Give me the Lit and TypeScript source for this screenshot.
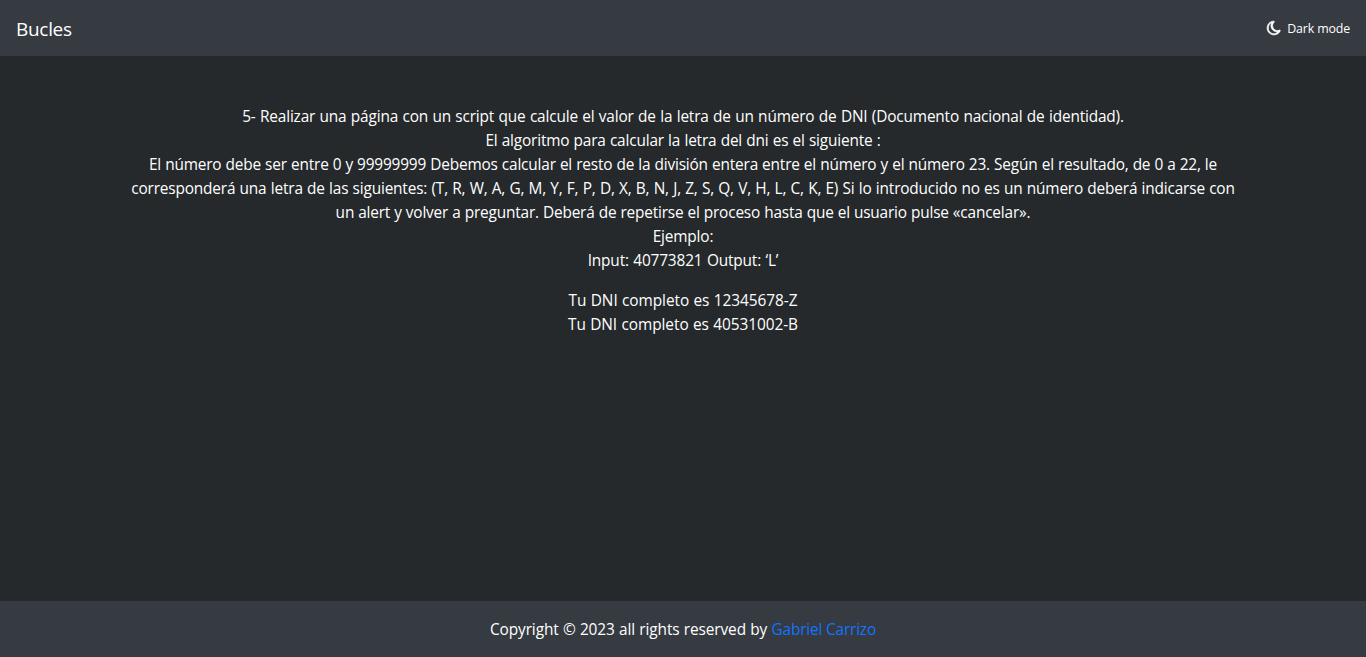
import { LitElement, html, css } from "lit";
import { customElement } from "lit/decorators.js";

@customElement("app-root")
export class AppRoot extends LitElement {
  static styles = css`
    :host {
      display: flex;
      flex-direction: column;
      height: 100vh;
      background: #25292b;
      color: #fff;
      font: 15.4px/24px "Segoe UI", "Open Sans", "Noto Sans", sans-serif;
      letter-spacing: -0.17px;
      white-space: nowrap;
    }
    header {
      display: flex;
      justify-content: space-between;
      align-items: center;
      height: 56px;
      padding: 0 16px;
      box-sizing: border-box;
      background: #363a41;
    }
    .brand { font-size: 19px; line-height: 30px; letter-spacing: -0.3px; padding-top: 2px; }
    .mode { display: flex; align-items: center; gap: 5px; font-size: 12.4px; line-height: 20px; letter-spacing: -0.15px; }
    .label { padding-top: 2px; }
    .moon { width: 16px; height: 16px; fill: #fff; stroke: #fff; stroke-width: 85; display: block; }
    main { flex: 1; padding-top: 49px; text-align: center; }
    p { margin: 0 0 16px; }
    .line { display: block; }
    .l1 { word-spacing: 0.57px; }
    .l2 { word-spacing: 0.38px; }
    .l3 { word-spacing: 0.27px; }
    .l4 { word-spacing: 0.45px; }
    .l5 { word-spacing: 0.2px; }
    .l7 { word-spacing: 0.7px; }
    .result { letter-spacing: -0.05px; word-spacing: 0.4px; }
    footer {
      height: 56px;
      padding: 17px 16px 15px;
      box-sizing: border-box;
      background: #363a41;
      text-align: center;
    }
    .copy { letter-spacing: -0.1px; word-spacing: 0.4px; }
    a { color: #0f75ff; text-decoration: none; }
  `;

  render() {
    return html`
      <header>
        <span class="brand">Bucles</span>
        <span class="mode">
          <svg class="moon" viewBox="0 0 1792 1792"><path d="M1340 1303q-54 9-110 9-182 0-337-90t-245-245-90-337q0-189 104-350-201 60-300 229t-107 384q0 130 51 248.500t136.500 204 204 136.500 220 51q144 0 253-61.500t220.500-171.500zm253-85q-94 203-283.500 324.500t-413.500 121.500q-156 0-298-61t-245-164-164-245-61-298q0-153 57.500-292.500t156-241.500 235.500-164.500 290-68.500q44-2 61 39 18 41-15 72-86 78-131.500 181.500t-45.500 218.500q0 148 73 273t198 198 273 73q118 0 228-51 41-18 72 13 14 14 17.500 34t-4.500 38z"/></svg>
          <span class="label">Dark mode</span>
        </span>
      </header>
      <main>
        <p>
          <span class="line l1">5- Realizar una página con un script que calcule el valor de la letra de un número de DNI (Documento nacional de identidad).</span>
          <span class="line l2">El algoritmo para calcular la letra del dni es el siguiente :</span>
          <span class="line l3">El número debe ser entre 0 y 99999999 Debemos calcular el resto de la división entera entre el número y el número 23. Según el resultado, de 0 a 22, le</span>
          <span class="line l4">corresponderá una letra de las siguientes: (T, R, W, A, G, M, Y, F, P, D, X, B, N, J, Z, S, Q, V, H, L, C, K, E) Si lo introducido no es un número deberá indicarse con</span>
          <span class="line l5">un alert y volver a preguntar. Deberá de repetirse el proceso hasta que el usuario pulse «cancelar».</span>
          <span class="line">Ejemplo:</span>
          <span class="line l7">Input: 40773821 Output: ‘L’</span>
        </p>
        <p>
          <span class="line result">Tu DNI completo es 12345678-Z</span>
          <span class="line result">Tu DNI completo es 40531002-B</span>
        </p>
      </main>
      <footer><span class="copy">Copyright © 2023 all rights reserved by </span><a>Gabriel Carrizo</a></footer>
    `;
  }
}
